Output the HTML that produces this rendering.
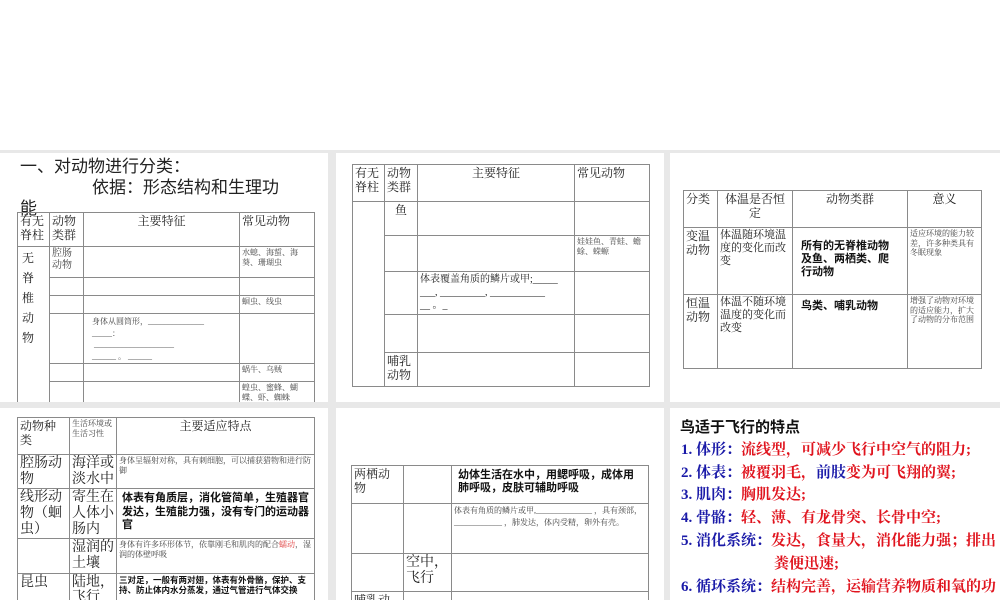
<!DOCTYPE html>
<html><head><meta charset="utf-8">
<style>
*{margin:0;padding:0;box-sizing:border-box}
body{width:1000px;height:600px;overflow:hidden;background:#fff;position:relative;font-family:"Liberation Serif","Noto Serif CJK SC","Noto Sans CJK SC",serif;color:#222}
.grey{position:absolute;left:0;top:150px;width:1000px;height:450px;background:#e8e8e8}
.p{position:absolute;background:#fff;overflow:hidden}
.a{position:absolute}
table{position:absolute;border-collapse:collapse;table-layout:fixed}
td{border:1px solid #8a8a8a;vertical-align:top;padding:1px 2px;line-height:1.2;overflow:hidden}
.s{font-size:8px;color:#444}
.m{font-size:12px}
.b{font-family:"Liberation Sans","Noto Sans CJK SC",sans-serif;font-weight:bold;color:#111}
.c{text-align:center}
.t{font-size:14px;line-height:1.12}
.bl{color:#1a1aa8}.rd{color:#e0141e}
.bird div{position:absolute;font-size:15px;font-weight:bold;font-family:"Liberation Serif","Noto Serif CJK SC",serif;white-space:nowrap}
.h{font-size:17px;font-family:'Liberation Sans','Noto Sans CJK SC',sans-serif;line-height:21px;color:#222}
</style></head><body>
<div class="grey"></div>

<div class="p" style="left:0;top:153px;width:328px;height:249px">
<div class="a h" style="left:20px;top:3px">一、对动物进行分类：</div>
<div class="a h" style="left:92px;top:24px">依据：形态结构和生理功</div>
<div class="a h" style="left:20px;top:45px">能</div>
<table style="left:17px;top:59px;width:297px">
<col style="width:32px"><col style="width:34px"><col style="width:156px"><col style="width:75px">
<tr style="height:34px"><td class="m">有无脊柱</td><td class="m">动物类群</td><td class="m c">主要特征</td><td class="m">常见动物</td></tr>
<tr style="height:31px"><td rowspan="6" class="m" style="line-height:20px;padding-left:4px">无<br>脊<br>椎<br>动<br>物</td><td class="s" style="font-size:10px">腔肠动物</td><td></td><td class="s">水螅、海蜇、海葵、珊瑚虫</td></tr>
<tr style="height:18px"><td></td><td></td><td></td></tr>
<tr style="height:18px"><td></td><td></td><td class="s">蛔虫、线虫</td></tr>
<tr style="height:50px"><td></td><td class="s" style="line-height:11.5px;padding:2px 2px 0 8px">身体从圆筒形，______________<br>_____：<br>&nbsp;____________________<br>______ 。 ______</td><td></td></tr>
<tr style="height:18px"><td></td><td></td><td class="s">蜗牛、乌贼</td></tr>
<tr style="height:30px"><td></td><td></td><td class="s">蝗虫、蜜蜂、蝴蝶、虾、蜘蛛</td></tr>
</table>
</div>

<div class="p" style="left:336px;top:153px;width:328px;height:249px">
<table style="left:16px;top:11px;width:297px">
<col style="width:32px"><col style="width:33px"><col style="width:157px"><col style="width:75px">
<tr style="height:37px"><td class="m">有无脊柱</td><td class="m">动物类群</td><td class="m c">主要特征</td><td class="m">常见动物</td></tr>
<tr style="height:34px"><td rowspan="5"></td><td class="m c">鱼</td><td></td><td></td></tr>
<tr style="height:36px"><td></td><td></td><td class="s">娃娃鱼、青蛙、蟾蜍、蝾螈</td></tr>
<tr style="height:43px"><td></td><td style="font-size:10px;line-height:13px">体表覆盖角质的鳞片或甲;_____<br>___, _________, ___________<br>__ 。_</td><td></td></tr>
<tr style="height:38px"><td></td><td></td><td></td></tr>
<tr style="height:34px"><td class="m">哺乳动物</td><td></td><td></td></tr>
</table>
</div>

<div class="p" style="left:670px;top:153px;width:330px;height:249px">
<table style="left:13px;top:37px;width:298px">
<col style="width:34px"><col style="width:75px"><col style="width:115px"><col style="width:74px">
<tr style="height:37px"><td class="m">分类</td><td class="m c">体温是否恒定</td><td class="m c">动物类群</td><td class="m c">意义</td></tr>
<tr style="height:67px"><td class="m">变温动物</td><td style="font-size:11px">体温随环境温度的变化而改变</td><td class="b" style="font-size:11px;padding:12px 8px">所有的无脊椎动物及鱼、两栖类、爬行动物</td><td class="s">适应环境的能力较差，许多种类具有冬眠现象</td></tr>
<tr style="height:74px"><td class="m">恒温动物</td><td style="font-size:11px">体温不随环境温度的变化而改变</td><td class="b" style="font-size:11px;padding:5px 8px">鸟类、哺乳动物</td><td class="s">增强了动物对环境的适应能力，扩大了动物的分布范围</td></tr>
</table>
</div>

<div class="p" style="left:0;top:408px;width:328px;height:192px">
<table style="left:17px;top:9px;width:297px">
<col style="width:52px"><col style="width:47px"><col style="width:198px">
<tr style="height:37px"><td class="m">动物种类</td><td class="s">生活环境或生活习性</td><td class="m c">主要适应特点</td></tr>
<tr style="height:34px"><td class="t">腔肠动物</td><td class="t">海洋或淡水中</td><td class="s">身体呈辐射对称，具有刺细胞，可以捕获猎物和进行防御</td></tr>
<tr style="height:50px"><td class="t">线形动物（蛔虫）</td><td class="t">寄生在人体小肠内</td><td class="b" style="font-size:11px;padding:3px 5px">体表有角质层，消化管简单，生殖器官发达，生殖能力强，没有专门的运动器官</td></tr>
<tr style="height:33px"><td></td><td class="t">湿润的土壤</td><td class="s">身体有许多环形体节，依靠刚毛和肌肉的配合<span style="color:#e04040">蠕动</span>，湿润的体壁呼吸</td></tr>
<tr style="height:40px"><td class="t">昆虫</td><td class="t">陆地，飞行</td><td class="b" style="font-size:8.5px">三对足，一般有两对翅，体表有外骨骼，保护、支持、防止体内水分蒸发，通过气管进行气体交换</td></tr>
</table>
</div>

<div class="p" style="left:336px;top:408px;width:328px;height:192px">
<table style="left:15px;top:57px;width:297px">
<col style="width:52px"><col style="width:48px"><col style="width:197px">
<tr style="height:38px"><td class="m">两栖动物</td><td></td><td class="b" style="font-size:11px;padding:3px 6px 0">幼体生活在水中，用鳃呼吸，成体用肺呼吸，皮肤可辅助呼吸</td></tr>
<tr style="height:50px"><td></td><td></td><td class="s" style="line-height:12px">体表有角质的鳞片或甲,______________ ，具有颈部，<br>____________ ，肺发达，体内受精，卵外有壳。</td></tr>
<tr style="height:38px"><td></td><td class="t">空中，飞行</td><td></td></tr>
<tr style="height:30px"><td class="m">哺乳动物</td><td></td><td></td></tr>
</table>
</div>

<div class="p bird" style="left:670px;top:408px;width:330px;height:192px">
<div style="left:10px;top:8px;color:#111;font-family:'Liberation Sans','Noto Sans CJK SC',sans-serif">鸟适于飞行的特点</div>
<div style="left:11px;top:30px"><span class="bl">1. 体形：</span><span class="rd">流线型，可减少飞行中空气的阻力;</span></div>
<div style="left:11px;top:53px"><span class="bl">2. 体表：</span><span class="rd">被覆羽毛，</span><span class="bl">前肢</span><span class="rd">变为可飞翔的翼;</span></div>
<div style="left:11px;top:75px"><span class="bl">3. 肌肉：</span><span class="rd">胸肌发达;</span></div>
<div style="left:11px;top:98px"><span class="bl">4. 骨骼：</span><span class="rd">轻、薄、有龙骨突、长骨中空;</span></div>
<div style="left:11px;top:121px"><span class="bl">5. 消化系统：</span><span class="rd">发达，食量大，消化能力强；排出</span></div>
<div style="left:104px;top:144px"><span class="rd">粪便迅速;</span></div>
<div style="left:11px;top:167px"><span class="bl">6. 循环系统：</span><span class="rd">结构完善，运输营养物质和氧的功</span></div>
</div>
</body></html>
